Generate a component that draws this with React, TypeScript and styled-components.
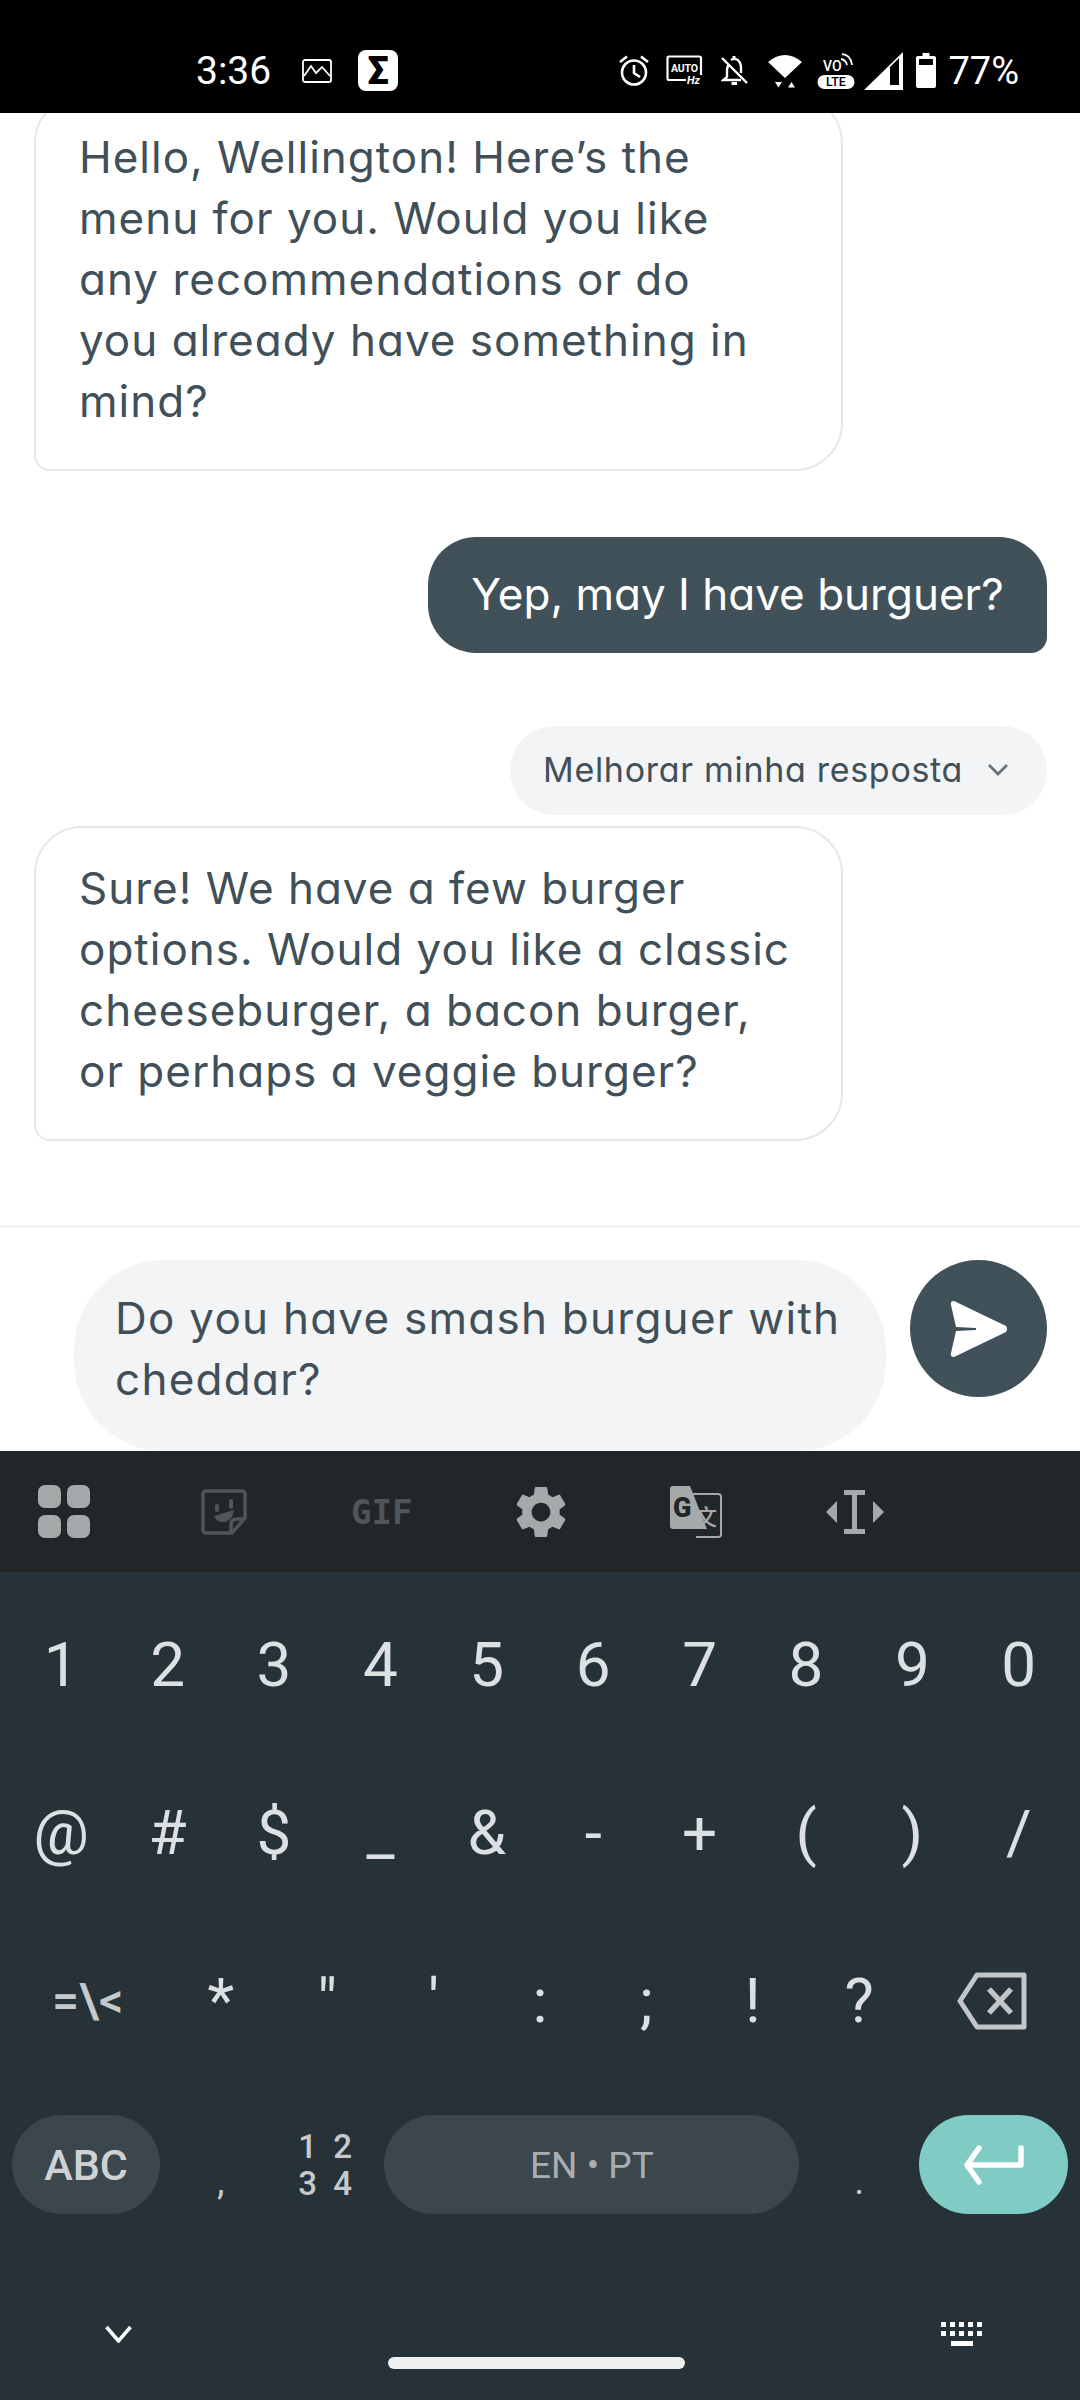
import styled, { createGlobalStyle } from "styled-components"

const GlobalStyle = createGlobalStyle`
    html, body {
        margin: 0;
        padding: 0;
        background: #ffffff;
    }
    * {
        box-sizing: border-box;
    }
`

const digits = ["1", "2", "3", "4", "5", "6", "7", "8", "9", "0"]
const symbols = ["@", "#", "$", "_", "&", "-", "+", "(", ")", "/"]
const punctuation = ["*", '"', "'", ":", ";", "!", "?"]

function ImageIcon() {
    return (
        <svg width="30" height="24" viewBox="0 0 30 24" fill="none" stroke="#fff" strokeWidth="1.8">
            <rect x="1" y="1" width="28" height="22" rx="2" />
            <path d="M2 17 L9 7 L14 14 L20 8 L28 17" />
        </svg>
    )
}

function AlarmIcon() {
    return (
        <svg width="30" height="31" viewBox="0 0 30 31" fill="none" stroke="#fff" strokeWidth="2.6">
            <circle cx="15" cy="17.5" r="12" />
            <path d="M15 10 V18 L21 22" />
            <path d="M1 7 L8 1.5 M29 7 L22 1.5" />
        </svg>
    )
}

function AutoHzIcon() {
    return (
        <svg width="38" height="32" viewBox="0 0 38 32" fill="none">
            <path d="M20 25 H3 Q1.5 25 1.5 23 V3 Q1.5 1.500 3 1.500 H33 Q35 1.500 35 3 V20" stroke="#fff" strokeWidth="2.2" />
            <text x="5" y="17" fill="#fff" fontFamily="Roboto, sans-serif" fontWeight="700" fontSize="10.500" letterSpacing="-0.2">AUTO</text>
            <text x="21" y="29" fill="#fff" fontFamily="Roboto, sans-serif" fontWeight="700" fontStyle="italic" fontSize="11">Hz</text>
        </svg>
    )
}

function BellOffIcon() {
    return (
        <svg width="27" height="31" viewBox="0 0 27 31" fill="none" stroke="#fff" strokeWidth="2.4">
            <path d="M8 9 Q6 12 6 15 V22 L2.500 25 H20" />
            <path d="M10 5 Q13 3 16 4.500 Q20 7 20 13 V18" />
            <path d="M1 3 L26 28" />
            <path d="M10.500 28.500 H16" strokeWidth="3" />
            <path d="M13 1 V3.500" strokeWidth="3" />
        </svg>
    )
}

function WifiIcon() {
    return (
        <svg width="34" height="34" viewBox="0 0 34 34" fill="#fff">
            <path d="M0 8 Q17 -6 34 8 L17 24 Z" />
            <path d="M7 28 H14 L10.500 33.500 Z" />
            <path d="M20 33.500 H27 L23.500 28 Z" />
        </svg>
    )
}

function VoLteIcon() {
    return (
        <svg width="38" height="36" viewBox="0 0 38 36" fill="none">
            <text x="6" y="18" fill="#fff" fontFamily="Roboto, sans-serif" fontWeight="500" fontSize="14">VO</text>
            <path d="M24 6 Q29 7 30 12 M25 1 Q34 2 35 12" stroke="#fff" strokeWidth="1.800" />
            <rect x="0.500" y="22" width="37" height="14" rx="7" fill="#fff" />
            <text x="9" y="33" fill="#000" fontFamily="Roboto, sans-serif" fontWeight="500" fontSize="12.500">LTE</text>
        </svg>
    )
}

function SignalIcon() {
    return (
        <svg width="39" height="38" viewBox="0 0 39 38" fill="#fff">
            <path fillRule="evenodd" d="M39 0 V38 H0 Z M26 15 V33 H35 V6 Z" />
        </svg>
    )
}

function BatteryIcon() {
    return (
        <svg width="20" height="35" viewBox="0 0 20 35" fill="#fff">
            <path fillRule="evenodd" d="M6.500 0 H13.500 V3 H18 Q20 3 20 5 V33 Q20 35 18 35 H2 Q0 35 0 33 V5 Q0 3 2 3 H6.500 Z M3 6 V12 H17 V6 Z" />
        </svg>
    )
}

function GridIcon() {
    return (
        <svg width="59" height="53" viewBox="0 0 59 53" fill="#a5a9aa">
            <rect x="0" y="0" width="23" height="23" rx="7" />
            <rect x="29" y="0" width="23" height="23" rx="7" />
            <rect x="0" y="30" width="23" height="23" rx="7" />
            <rect x="29" y="30" width="23" height="23" rx="7" />
        </svg>
    )
}

function StickerIcon() {
    return (
        <svg width="46" height="46" viewBox="0 0 46 46" fill="none" stroke="#4f5558" strokeWidth="3.500">
            <path d="M5 2 H41 Q44 2 44 5 V29 L31 44 H5 Q2 44 2 41 V5 Q2 2 5 2 Z" />
            <path d="M30 44 V36 Q30 30 36 30 H44" />
            <path d="M16 17 V21 M30 12 V18" strokeWidth="4" strokeLinecap="round" />
            <path d="M13 27 L33 21 Q31 34 20 33 Q15 32 13 27 Z" fill="#4f5558" stroke="none" />
        </svg>
    )
}

function GearIcon() {
    return (
        <svg width="50" height="52" viewBox="2.400 2.400 19.200 19.200" fill="#a5a9aa">
            <path d="M19.140 12.940c0.040-0.300,0.060-0.610,0.060-0.940c0-0.320-0.020-0.640-0.070-0.940l2.030-1.580c0.180-0.140,0.230-0.410,0.120-0.610l-1.920-3.320c-0.120-0.220-0.370-0.290-0.590-0.220l-2.390,0.960c-0.500-0.380-1.030-0.700-1.620-0.940L14.400,2.810c-0.040-0.240-0.240-0.410-0.480-0.410h-3.840c-0.240,0-0.430,0.170-0.470,0.410L9.250,5.350C8.660,5.590,8.120,5.920,7.630,6.290L5.240,5.330c-0.220-0.080-0.470,0-0.590,0.220L2.740,8.870C2.620,9.080,2.660,9.340,2.860,9.48l2.030,1.580C4.840,11.360,4.800,11.690,4.800,12s0.020,0.640,0.070,0.940l-2.030,1.580c-0.180,0.140-0.230,0.410-0.120,0.610l1.920,3.320c0.120,0.220,0.370,0.290,0.590,0.220l2.390-0.960c0.500,0.380,1.030,0.700,1.620,0.940l0.360,2.540c0.050,0.240,0.240,0.410,0.480,0.410h3.840c0.240,0,0.440-0.170,0.470-0.410l0.360-2.540c0.590-0.240,1.130-0.560,1.620-0.940l2.390,0.960c0.220,0.080,0.470,0,0.590-0.220l1.920-3.320c0.120-0.220,0.070-0.470-0.120-0.610L19.140,12.940z M12,15.600c-1.980,0-3.600-1.620-3.600-3.600s1.620-3.600,3.600-3.600s3.600,1.620,3.600,3.600S13.980,15.600,12,15.600z" />
        </svg>
    )
}

function TranslateIcon() {
    return (
        <svg width="52" height="52" viewBox="0 0 52 52" fill="none">
            <path d="M20 8 H48 Q51 8 51 11 V49 Q51 51 48 51 H26" stroke="#a5a9aa" strokeWidth="2" />
            <path d="M3 0 H20 L37 43 H3 Q0 43 0 40 V3 Q0 0 3 0 Z" fill="#a5a9aa" />
            <text x="3" y="31" fill="#212629" fontFamily="Roboto, sans-serif" fontWeight="900" fontSize="27">G</text>
            <text x="25" y="39" fill="#a5a9aa" fontFamily="'Noto Sans CJK SC', sans-serif" fontWeight="500" fontSize="22">文</text>
        </svg>
    )
}

function CursorIcon() {
    return (
        <svg width="58" height="44" viewBox="0 0 58 44" fill="#a5a9aa">
            <rect x="18" y="0" width="21" height="5" />
            <rect x="18" y="39" width="21" height="5" />
            <rect x="26" y="4" width="5" height="36" />
            <path d="M11 11 V33 L0 22 Z" />
            <path d="M47 11 V33 L58 22 Z" />
        </svg>
    )
}

function BackspaceIcon() {
    return (
        <svg width="70" height="58" viewBox="0 0 70 58" fill="none" stroke="#c2c6c8" strokeWidth="5" strokeLinejoin="round">
            <path d="M20 3 H67 V55 H20 L3 29 Z" />
            <path d="M32 17 L54 41 M54 17 L32 41" strokeWidth="5.500" />
        </svg>
    )
}

function EnterIcon() {
    return (
        <svg width="60" height="40" viewBox="0 0 60 40" fill="none" stroke="#fff" strokeWidth="5.500" strokeLinecap="round" strokeLinejoin="round">
            <path d="M57 3 V20 H4" />
            <path d="M15 3 L3 20 L15 37" />
        </svg>
    )
}

function ChevronDownIcon() {
    return (
        <svg width="27" height="18" viewBox="0 0 27 18" fill="none" stroke="#fff" strokeWidth="3.500">
            <path d="M1.500 2 L13.500 16 L25.500 2" />
        </svg>
    )
}

function KeyboardHideIcon() {
    const dots = [0, 9, 18, 27, 36]
    return (
        <svg width="42" height="24" viewBox="0 0 42 24" fill="#fff">
            {dots.map((x) => (
                <rect key={`a${x}`} x={x} y="0" width="5" height="5" />
            ))}
            {dots.map((x) => (
                <rect key={`b${x}`} x={x} y="9" width="5" height="5" />
            ))}
            <rect x="10" y="19" width="22" height="5" />
        </svg>
    )
}

function SmallChevron() {
    return (
        <svg width="22" height="13" viewBox="0 0 22 13" fill="none" stroke="#65747c" strokeWidth="2.800">
            <path d="M2 2 L11 11 L20 2" />
        </svg>
    )
}

function SendIcon() {
    return (
        <svg width="58" height="58" viewBox="0 0 58 58" fill="#fff">
            <path d="M4 1 L56 26 Q58 29 56 32 L4 57 Q0 57 1 53 L6 31 L26 30 V28 L6 27 L1 5 Q0 1 4 1 Z" />
        </svg>
    )
}

export default function App() {
    return (
        <Screen>
            <GlobalStyle />
            <StatusBar>
                <StatusLeft>
                    <Clock>3:36</Clock>
                    <ImageIcon />
                    <SigmaBadge>Σ</SigmaBadge>
                </StatusLeft>
                <StatusRight>
                    <AlarmIcon />
                    <IconSlot $gap={17}><AutoHzIcon /></IconSlot>
                    <IconSlot $gap={17}><BellOffIcon /></IconSlot>
                    <IconSlot $gap={20}><WifiIcon /></IconSlot>
                    <IconSlot $gap={15}><VoLteIcon /></IconSlot>
                    <IconSlot $gap={9}><SignalIcon /></IconSlot>
                    <IconSlot $gap={13}><BatteryIcon /></IconSlot>
                    <Percent>77%</Percent>
                </StatusRight>
            </StatusBar>

            <Chat>
                <BotBubble>
                    Hello, Wellington! Here’s the<br />
                    menu for you. Would you like<br />
                    any recommendations or do<br />
                    you already have something in<br />
                    mind?
                </BotBubble>
                <UserBubble>Yep, may I have burguer?</UserBubble>
                <ImprovePill>
                    <span>Melhorar minha resposta</span>
                    <SmallChevron />
                </ImprovePill>
                <BotBubble $top={11}>
                    Sure! We have a few burger<br />
                    options. Would you like a classic<br />
                    cheeseburger, a bacon burger,<br />
                    or perhaps a veggie burger?
                </BotBubble>
            </Chat>

            <Composer>
                <InputBox>
                    Do you have smash burguer with<br />
                    cheddar?
                </InputBox>
                <SendButton><SendIcon /></SendButton>
            </Composer>

            <Toolbar>
                <GridIcon />
                <StickerIcon />
                <GifLabel>GIF</GifLabel>
                <GearIcon />
                <TranslateIcon />
                <CursorIcon />
            </Toolbar>

            <Keyboard>
                <KeyRow>
                    {digits.map((d) => (
                        <Key key={d}>{d}</Key>
                    ))}
                </KeyRow>
                <KeyRow>
                    {symbols.map((s) => (
                        <Key key={s}>{s}</Key>
                    ))}
                </KeyRow>
                <PunctuationRow>
                    <SmallKey>=\&lt;</SmallKey>
                    {punctuation.map((p) => (
                        <Key key={p}>{p}</Key>
                    ))}
                    <Key><BackspaceIcon /></Key>
                </PunctuationRow>
                <BottomRow>
                    <AbcKey>ABC</AbcKey>
                    <LowKey>,</LowKey>
                    <NumbersKey>1 2<br />3 4</NumbersKey>
                    <SpaceKey>EN • PT</SpaceKey>
                    <LowKey>.</LowKey>
                    <EnterKey><EnterIcon /></EnterKey>
                </BottomRow>
                <NavRow>
                    <ChevronDownIcon />
                    <KeyboardHideIcon />
                </NavRow>
                <HomeBar />
            </Keyboard>
        </Screen>
    )
}

const Screen = styled.div`
    width: 1080px;
    height: 2400px;
    display: flex;
    flex-direction: column;
    overflow: hidden;
    background: #ffffff;
`

const StatusBar = styled.div`
    flex: 0 0 113px;
    background: #000000;
    color: #ffffff;
    display: flex;
    justify-content: space-between;
    align-items: center;
    padding: 28px 61px 0 196px;
    font-family: Roboto, sans-serif;
    position: relative;
    z-index: 2;
`

const StatusLeft = styled.div`
    display: flex;
    align-items: center;
`

const Clock = styled.span`
    font-size: 39px;
    width: 106px;
`

const SigmaBadge = styled.div`
    width: 40px;
    height: 41px;
    margin-left: 26px;
    border-radius: 8px;
    background: #ffffff;
    color: #000000;
    display: flex;
    align-items: center;
    justify-content: center;
    font-size: 38px;
    font-weight: 900;
    line-height: 1;
`

const StatusRight = styled.div`
    display: flex;
    align-items: center;
`

const IconSlot = styled.div<{ $gap: number }>`
    display: flex;
    margin-left: ${(p) => p.$gap}px;
`

const Percent = styled.span`
    font-size: 38px;
    margin-left: 12px;
`

const Chat = styled.div`
    flex: 0 0 1112px;
    overflow: hidden;
    display: flex;
    flex-direction: column;
    justify-content: flex-end;
    padding: 0 33px 84px 34px;
`

const ChatText = styled.div`
    font-family: Inter, sans-serif;
    font-feature-settings: "cv11";
    font-size: 44px;
    line-height: 61px;
    letter-spacing: 1px;
    white-space: nowrap;
`

const BotBubble = styled(ChatText)<{ $top?: number }>`
    flex: none;
    width: 809px;
    margin-top: ${(p) => p.$top ?? 0}px;
    padding: 30px 43px 37px 43px;
    border: 2px solid #e5e7eb;
    border-radius: 48px 48px 48px 16px;
    color: #404f58;
`

const UserBubble = styled(ChatText)`
    flex: none;
    align-self: flex-end;
    width: 619px;
    height: 116px;
    margin-top: 66px;
    padding: 27px 0 0;
    text-align: center;
    letter-spacing: 0;
    background: #41515a;
    border-radius: 48px 48px 16px 48px;
    color: #ffffff;
`

const ImprovePill = styled.div`
    flex: none;
    align-self: flex-end;
    width: 537px;
    height: 89px;
    margin-top: 73px;
    padding: 0 38px 3px 33px;
    display: flex;
    align-items: center;
    justify-content: space-between;
    background: #f3f4f6;
    border-radius: 45px;
    font-family: Inter, sans-serif;
    font-feature-settings: "cv11";
    font-size: 34px;
    letter-spacing: 0.7px;
    color: #404f58;
    white-space: nowrap;
`

const Composer = styled.div`
    flex: 0 0 226px;
    border-top: 3px solid #f3f4f6;
    padding: 32px 33px 0 74px;
    display: flex;
    justify-content: space-between;
    align-items: flex-start;
`

const InputBox = styled(ChatText)`
    width: 812px;
    height: 191px;
    padding: 28px 0 0 41px;
    letter-spacing: 1.25px;
    background: #f3f4f6;
    border-radius: 90px;
    color: #404f58;
`

const SendButton = styled.div`
    width: 137px;
    height: 137px;
    border-radius: 50%;
    background: #41515a;
    display: flex;
    align-items: center;
    justify-content: center;
`

const Toolbar = styled.div`
    flex: 0 0 121px;
    background: #212629;
    display: flex;
    align-items: center;
    gap: 104px;
    padding-left: 38px;
`

const GifLabel = styled.span`
    width: 61px;
    font-family: "DejaVu Sans Mono", monospace;
    font-weight: 700;
    font-size: 34px;
    line-height: 1;
    color: #4f5558;
    text-align: center;
    white-space: nowrap;
`

const Keyboard = styled.div`
    flex: 1;
    background: #263238;
    padding: 8px 8px 0;
    display: flex;
    flex-direction: column;
    font-family: Roboto, sans-serif;
    color: #dde0e2;
`

const KeyRow = styled.div`
    flex: 0 0 168px;
    display: grid;
    grid-template-columns: repeat(10, 1fr);
`

const PunctuationRow = styled(KeyRow)`
    grid-template-columns: 1.5fr repeat(7, 1fr) 1.5fr;
`

const BottomRow = styled(KeyRow)`
    margin-top: -4px;
    grid-template-columns: 1.5fr 1fr 1fr 4fr 1fr 1.5fr;
    align-items: center;
`

const Key = styled.div`
    display: flex;
    align-items: center;
    justify-content: center;
    padding-top: 2px;
    font-size: 62px;
    font-weight: 400;
    line-height: 1;
`

const SmallKey = styled(Key)`
    font-size: 48px;
    font-weight: 500;
    color: #c6cacc;
`

const AbcKey = styled(Key)`
    width: 148px;
    height: 99px;
    margin-left: 4px;
    border-radius: 50px;
    background: #3c474d;
    font-size: 43px;
    font-weight: 500;
    color: #ced2d4;
`

const LowKey = styled(Key)`
    font-size: 38px;
    font-weight: 400;
    padding-top: 34px;
    color: #c6cacc;
`

const NumbersKey = styled(Key)`
    font-size: 33px;
    line-height: 37px;
    font-weight: 500;
    letter-spacing: 4px;
    text-align: center;
    color: #c6cacc;
`

const SpaceKey = styled(Key)`
    width: 415px;
    height: 99px;
    margin-left: 4px;
    border-radius: 50px;
    background: #3c474d;
    font-size: 37px;
    font-weight: 400;
    color: #a8aeb1;
`

const EnterKey = styled(Key)`
    width: 149px;
    height: 99px;
    justify-self: end;
    margin-right: 4px;
    border-radius: 50px;
    background: #80cbc4;
`

const NavRow = styled.div`
    display: flex;
    justify-content: space-between;
    align-items: center;
    padding: 74px 89px 0 97px;
`

const HomeBar = styled.div`
    width: 297px;
    height: 12px;
    margin: 11px 0 0 380px;
    border-radius: 6px;
    background: #eef0ef;
`
